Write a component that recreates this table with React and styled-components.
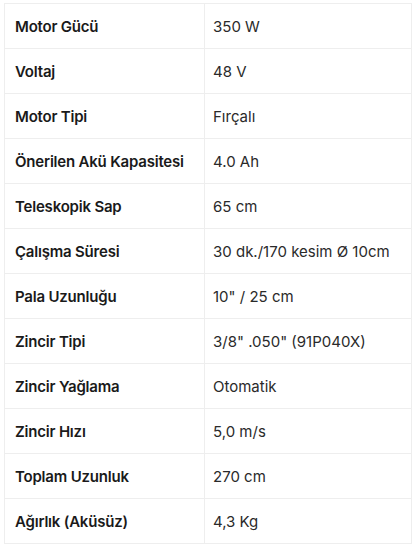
import React from "react";
import styled, { createGlobalStyle } from "styled-components";

const specs = [
  ["Motor Gücü", "350 W"],
  ["Voltaj", "48 V"],
  ["Motor Tipi", "Fırçalı"],
  ["Önerilen Akü Kapasitesi", "4.0 Ah"],
  ["Teleskopik Sap", "65 cm"],
  ["Çalışma Süresi", "30 dk./170 kesim Ø 10cm"],
  ["Pala Uzunluğu", "10\" / 25 cm"],
  ["Zincir Tipi", "3/8\" .050\" (91P040X)"],
  ["Zincir Yağlama", "Otomatik"],
  ["Zincir Hızı", "5,0 m/s"],
  ["Toplam Uzunluk", "270 cm"],
  ["Ağırlık (Aküsüz)", "4,3 Kg"],
];

export default function App() {
  return (
    <>
      <GlobalStyles />
      <Wrapper>
        <SpecTable>
          <tbody>
            {specs.map(([label, value]) => (
              <Row key={label}>
                <Label>{label}</Label>
                <Value>{value}</Value>
              </Row>
            ))}
          </tbody>
        </SpecTable>
      </Wrapper>
    </>
  );
}

const GlobalStyles = createGlobalStyle`
  body {
    margin: 0;
    background: #fff;
    font-family: "Inter", "Noto Sans", sans-serif;
  }
`;

const Wrapper = styled.div`
  padding: 3px 5px 0 4px;
`;

const SpecTable = styled.table`
  width: 408px;
  border-collapse: collapse;
  table-layout: fixed;
`;

const Row = styled.tr`
  height: 45px;
`;

const Cell = styled.td`
  border: 1px solid #eeeeee;
  font-size: 15px;
  vertical-align: middle;
  white-space: nowrap;
`;

const Label = styled(Cell)`
  width: 189px;
  padding: 0 0 0 10px;
  font-weight: 600;
  letter-spacing: -0.2px;
  color: #1a1a1a;
`;

const Value = styled(Cell)`
  padding: 0 0 0 8px;
  font-weight: 400;
  color: #2a2a2a;
`;
